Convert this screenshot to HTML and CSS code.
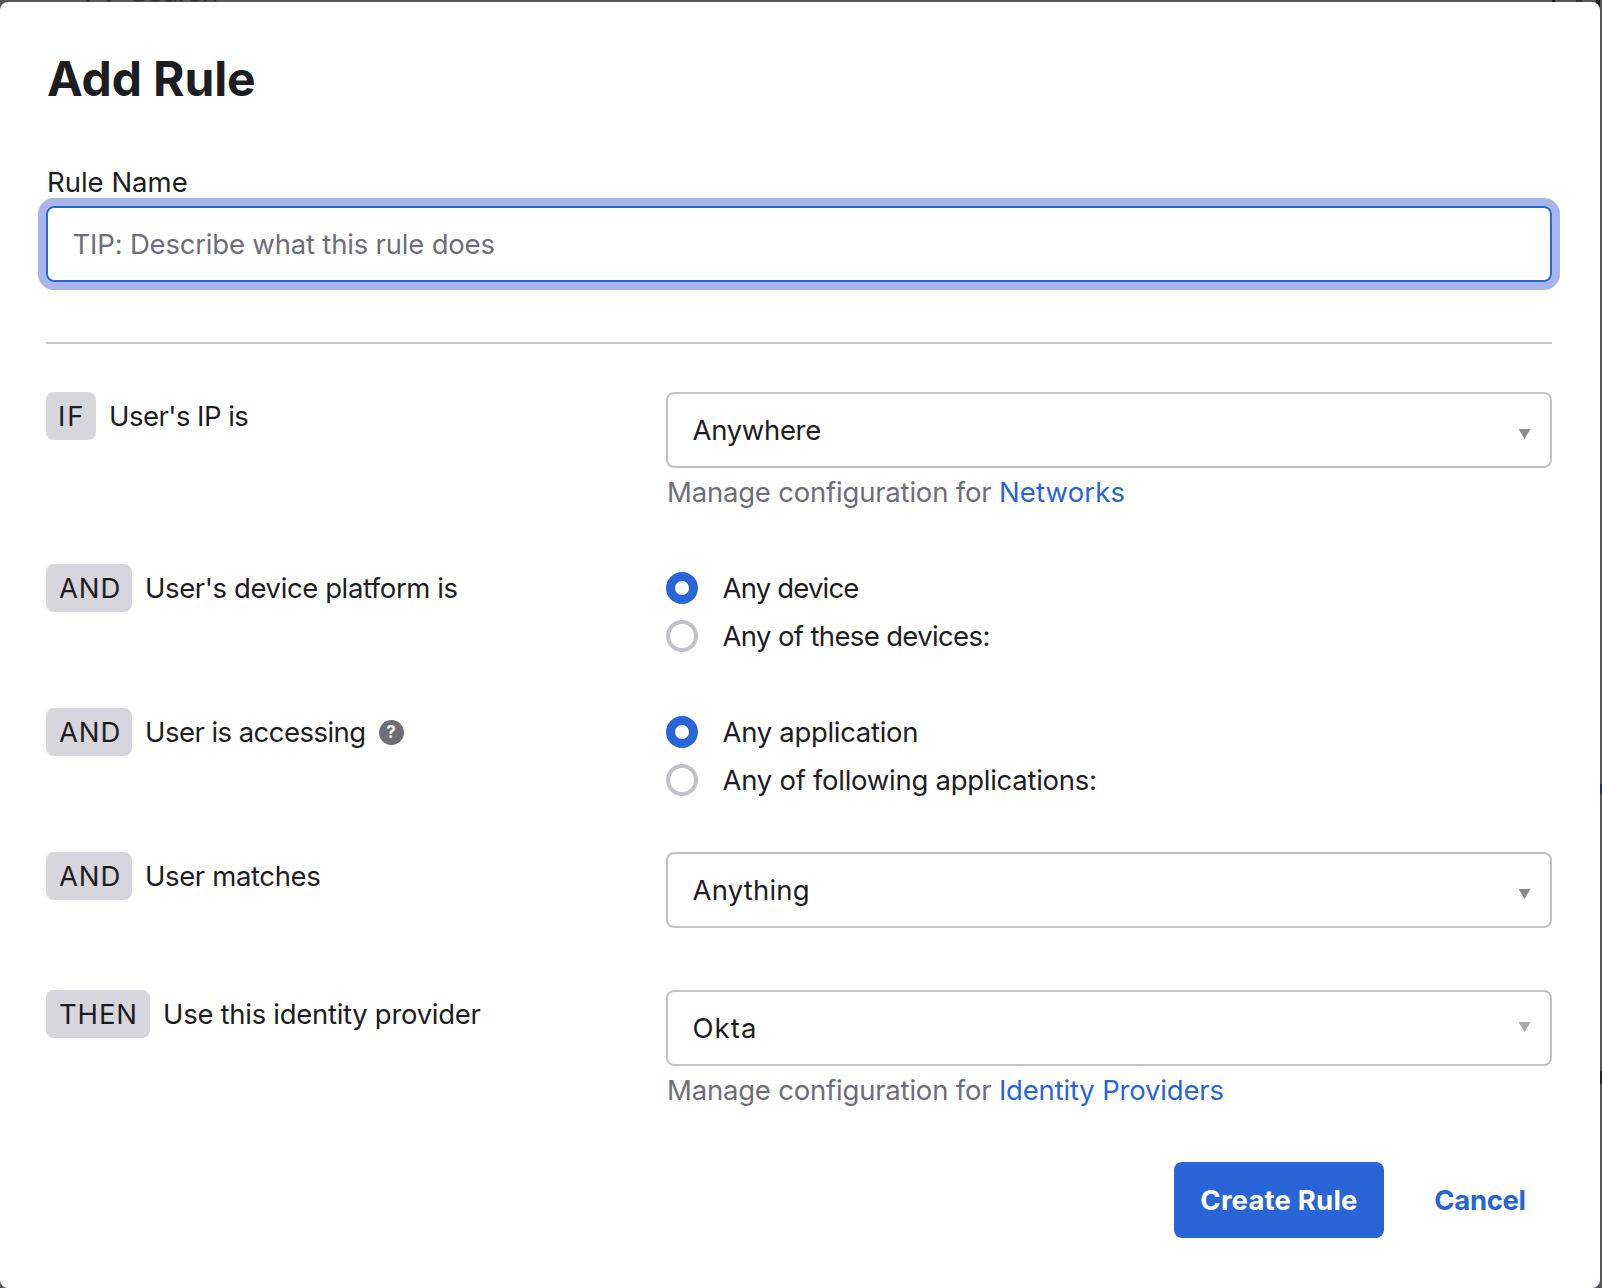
FILE: index.html
```html
<!DOCTYPE html>
<html lang="en">
<head>
<meta charset="utf-8">
<title>Add Rule</title>
<link rel="stylesheet" href="styles.css">
</head>
<body>
<div class="backdrop" aria-hidden="true">
  <span class="backdrop-search">Search</span>
  <span class="mark lens-left"></span>
  <span class="mark lens-right"></span>
  <span class="mark bar"></span>
  <span class="mark slash"></span>
  <span class="mark corner"></span>
  <span class="mark edge-blue"></span>
  <span class="mark edge"></span>
</div>
<main class="modal">
  <h1 class="title">Add Rule</h1>
  <label class="field-label">Rule Name</label>
  <div class="name-input"><span class="t-tip">TIP: Describe what this rule does</span></div>
  <hr class="divider">

  <section class="row row-ip">
    <div class="cond"><span class="badge badge-if">IF</span><span class="t-ip">User's IP is</span></div>
    <div class="control">
      <div class="select"><span class="t-anywhere">Anywhere</span><svg class="caret" viewBox="0 0 12 10"><path d="M0 0H12L6 10Z"/></svg></div>
      <p class="hint"><span class="t-manage">Manage configuration for </span><a class="t-net">Networks</a></p>
    </div>
  </section>

  <section class="row row-device">
    <div class="cond"><span class="badge badge-and">AND</span><span class="t-platform">User's device platform is</span></div>
    <div class="control">
      <div class="radio"><i class="dot on"></i><span class="t-anydev">Any device</span></div>
      <div class="radio"><i class="dot"></i><span class="t-these">Any of these devices:</span></div>
    </div>
  </section>

  <section class="row row-app">
    <div class="cond"><span class="badge badge-and">AND</span><span class="t-access">User is accessing</span><span class="help">?</span></div>
    <div class="control">
      <div class="radio"><i class="dot on"></i><span class="t-anyapp">Any application</span></div>
      <div class="radio"><i class="dot"></i><span class="t-follow">Any of following applications:</span></div>
    </div>
  </section>

  <section class="row row-match">
    <div class="cond"><span class="badge badge-and">AND</span><span class="t-match">User matches</span></div>
    <div class="control">
      <div class="select"><span class="t-anything">Anything</span><svg class="caret" viewBox="0 0 12 10"><path d="M0 0H12L6 10Z"/></svg></div>
    </div>
  </section>

  <section class="row row-then">
    <div class="cond"><span class="badge badge-then">THEN</span><span class="t-use">Use this identity provider</span></div>
    <div class="control">
      <div class="select"><span class="t-okta">Okta</span><svg class="caret caret-light" viewBox="0 0 12 10"><path d="M0 0H12L6 10Z"/></svg></div>
      <p class="hint"><span class="t-manage">Manage configuration for </span><a class="t-idp">Identity Providers</a></p>
    </div>
  </section>

  <footer class="actions">
    <button class="btn primary">Create Rule</button>
    <button class="btn link">Cancel</button>
  </footer>
</main>
</body>
</html>
```
FILE: styles.css
```css
* { box-sizing: border-box; }
html, body { margin: 0; height: 100%; }
body {
  position: relative;
  overflow: hidden;
  padding-top: 2px;
  background: #57555b;
  color: #1d1d21;
  font-family: Inter, "Liberation Sans", sans-serif;
  font-size: 27.5px;
  line-height: 48px;
}
.backdrop { position: absolute; inset: 0; overflow: hidden; }
.backdrop-search { position: absolute; left: 130px; top: -32px; color: #3a383d; line-height: 48px; letter-spacing: -0.6px; }
.mark { position: absolute; top: 0; height: 2px; background: #3a383d; }
.lens-left { left: 86px; width: 4px; }
.lens-right { left: 107px; width: 4px; }
.bar { left: 1552px; width: 3px; background: #222; }
.slash { left: 1576px; width: 6px; background: #333; }
.corner { left: 1596px; width: 4px; height: 8px; background: #1d1d21; }
.edge { left: 1600px; top: 1071px; width: 2px; height: 13px; background: #232228; }
.edge-blue { left: 1600px; top: 784px; width: 2px; height: 10px; background: #1c3563; }

.modal {
  position: relative;
  display: flex;
  flex-direction: column;
  width: 1600px;
  height: 1286px;
  padding: 0 48px 0 46px;
  border-radius: 8px;
  background: #fff;
}
.title {
  margin: 47px 0 0;
  padding-left: 1px;
  font-size: 48px;
  line-height: 60px;
  font-weight: 700;
  letter-spacing: -0.13px;
}
.field-label { display: block; height: 48px; margin-top: 49px; padding-left: 1px; }
.name-input {
  height: 76px;
  padding-left: 24.5px;
  border: 2px solid #2a65d8;
  border-radius: 8px;
  box-shadow: 0 0 0 8px #a8b5e8;
  color: #6e6e78;
  line-height: 72px;
}
.divider { width: 100%; height: 2px; margin: 60px 0 48px; border: 0; background: #c1c1c8; }

.row { display: grid; grid-template-columns: 620px 886px; }
.row-ip { height: 172px; }
.row-device, .row-app { height: 144px; }
.row-match { height: 138px; }
.row-then { height: 172px; }
.cond { display: flex; height: 48px; white-space: nowrap; }
.badge {
  margin-right: 13px;
  padding-left: 13px;
  border-radius: 8px;
  background: #d7d6dc;
}
.badge-if { width: 50px; padding-left: 12px; letter-spacing: 1.8px; }
.badge-and { width: 86px; letter-spacing: 0.9px; }
.badge-then { width: 104px; letter-spacing: 0.85px; }
.help {
  width: 25px;
  height: 25px;
  margin: 12px 0 0 13px;
  border-radius: 50%;
  background: #6e6e78;
  color: #fff;
  font-size: 17px;
  font-weight: 700;
  line-height: 25px;
  text-align: center;
}
.select {
  display: flex;
  justify-content: space-between;
  height: 76px;
  padding: 0 19.5px 0 24.5px;
  border: 2px solid #c1c1c8;
  border-radius: 8px;
  line-height: 72px;
}
.caret { width: 13px; height: 10px; margin-top: 35px; fill: #8b8b8b; }
.caret-light { margin-top: 30px; fill: #a9a9b1; }
.hint { margin: 0; padding-left: 1px; color: #6e6e78; white-space: pre; }
.hint a { color: #2a65d8; }
.radio { display: flex; align-items: center; height: 48px; }
.dot { width: 32px; height: 32px; margin-right: 24.5px; border: 4px solid #c1c1c8; border-radius: 50%; }
.dot.on { border: 9.5px solid #2a65d8; }

/* tracking per text run */
.t-tip { letter-spacing: -0.19px; }
.t-ip { letter-spacing: -0.54px; }
.t-platform { letter-spacing: -0.4px; }
.t-anywhere { letter-spacing: -0.33px; }
.t-manage { letter-spacing: -0.2px; }
.t-net { letter-spacing: 0.15px; }
.t-anydev { letter-spacing: -0.82px; }
.t-these { letter-spacing: -0.64px; }
.t-access { letter-spacing: -0.54px; }
.t-anyapp { letter-spacing: -0.31px; }
.t-match { letter-spacing: -0.38px; }
.t-follow { letter-spacing: -0.27px; }
.t-anything { letter-spacing: 0.2px; }
.t-use { letter-spacing: -0.29px; }
.t-okta { letter-spacing: 1.05px; }
.t-idp { letter-spacing: -0.18px; }

.actions { display: flex; gap: 24px; justify-content: flex-end; }
.btn {
  height: 76px;
  padding: 0;
  border: 0;
  border-radius: 8px;
  background: none;
  color: #2a65d8;
  font: 700 27.5px/76px Inter, "Liberation Sans", sans-serif;
  letter-spacing: -0.36px;
}
.primary { width: 210px; background: #2a65d8; color: #fff; letter-spacing: 0.19px; }
.link { width: 144px; }
```
